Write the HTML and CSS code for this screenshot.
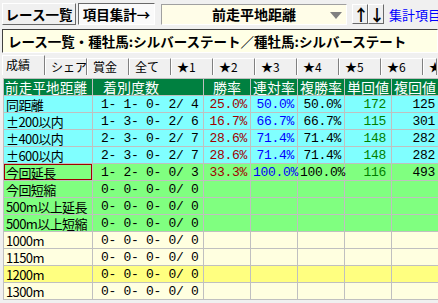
FILE: index.html
```html
<!DOCTYPE html>
<html lang="ja">
<head>
    <meta charset="UTF-8">
    <title>項目集計</title>
    <link rel="stylesheet" href="styles.css">
</head>
<body>
    <div class="toolbar">
        <div class="btn btn-list">レース一覧</div>
        <div class="btn btn-pressed">項目集計→</div>
        <div class="combo">
            <span class="combo-text">前走平地距離</span>
            <span class="combo-arrow"></span>
        </div>
        <div class="arrows">
            <div class="btn btn-arrow">↑</div>
            <div class="btn btn-arrow">↓</div>
        </div>
        <a class="link" href="#">集計項目...</a>
    </div>

    <div class="title-bar">レース一覧・種牡馬:シルバーステート／種牡馬:シルバーステート</div>

    <div class="tabs">
        <div class="tab tab-active">成績</div>
        <div class="tab">シェア</div>
        <div class="tab">賞金</div>
        <div class="tab">全て</div>
        <div class="tab">★1</div>
        <div class="tab">★2</div>
        <div class="tab">★3</div>
        <div class="tab">★4</div>
        <div class="tab">★5</div>
        <div class="tab">★6</div>
        <div class="tab tab-last">★7</div>
    </div>

    <table class="grid">
        <colgroup>
            <col class="c-name">
            <col class="c-count">
            <col class="c-num"><col class="c-num"><col class="c-num"><col class="c-num"><col class="c-num">
        </colgroup>
        <thead>
            <tr>
                <th>前走平地距離</th>
                <th class="h-count">着別度数</th>
                <th>勝率</th>
                <th>連対率</th>
                <th>複勝率</th>
                <th>単回値</th>
                <th>複回値</th>
            </tr>
        </thead>
        <tbody>
            <tr class="cyan">
                <td>同距離</td><td class="cnt">1- 1- 0- 2/ 4</td>
                <td class="num win">25.0%</td><td class="num ren">50.0%</td><td class="num">50.0%</td><td class="num tan">172</td><td class="num">125</td>
            </tr>
            <tr class="cyan">
                <td>±200以内</td><td class="cnt">1- 3- 0- 2/ 6</td>
                <td class="num win">16.7%</td><td class="num ren">66.7%</td><td class="num">66.7%</td><td class="num tan">115</td><td class="num">301</td>
            </tr>
            <tr class="cyan">
                <td>±400以内</td><td class="cnt">2- 3- 0- 2/ 7</td>
                <td class="num win">28.6%</td><td class="num ren">71.4%</td><td class="num">71.4%</td><td class="num tan">148</td><td class="num">282</td>
            </tr>
            <tr class="cyan">
                <td>±600以内</td><td class="cnt">2- 3- 0- 2/ 7</td>
                <td class="num win">28.6%</td><td class="num ren">71.4%</td><td class="num">71.4%</td><td class="num tan">148</td><td class="num">282</td>
            </tr>
            <tr class="green">
                <td class="selected">今回延長</td><td class="cnt">1- 2- 0- 0/ 3</td>
                <td class="num win">33.3%</td><td class="num ren">100.0%</td><td class="num">100.0%</td><td class="num tan">116</td><td class="num">493</td>
            </tr>
            <tr class="green">
                <td>今回短縮</td><td class="cnt">0- 0- 0- 0/ 0</td>
                <td></td><td></td><td></td><td></td><td></td>
            </tr>
            <tr class="green">
                <td>500m以上延長</td><td class="cnt">0- 0- 0- 0/ 0</td>
                <td></td><td></td><td></td><td></td><td></td>
            </tr>
            <tr class="green">
                <td>500m以上短縮</td><td class="cnt">0- 0- 0- 0/ 0</td>
                <td></td><td></td><td></td><td></td><td></td>
            </tr>
            <tr class="cream">
                <td>1000m</td><td class="cnt">0- 0- 0- 0/ 0</td>
                <td></td><td></td><td></td><td></td><td></td>
            </tr>
            <tr class="cream">
                <td>1150m</td><td class="cnt">0- 0- 0- 0/ 0</td>
                <td></td><td></td><td></td><td></td><td></td>
            </tr>
            <tr class="yellow">
                <td>1200m</td><td class="cnt">0- 0- 0- 0/ 0</td>
                <td></td><td></td><td></td><td></td><td></td>
            </tr>
            <tr class="cream">
                <td>1300m</td><td class="cnt">0- 0- 0- 0/ 0</td>
                <td></td><td></td><td></td><td></td><td></td>
            </tr>
        </tbody>
    </table>
</body>
</html>
```

FILE: styles.css
```css
body {
    margin: 0;
    width: 438px;
    height: 303px;
    overflow: hidden;
    background-color: #f0f0f0;
    font-family: "Noto Sans CJK JP", "DejaVu Sans", sans-serif;
    font-size: 14px;
    color: #000;
}
.toolbar {
    display: flex;
    align-items: center;
    width: 438px;
    height: 22px;
    padding: 3px 0 0 2px;
    white-space: nowrap;
    overflow: hidden;
}
.toolbar > * {
    flex: none;
}
.btn {
    box-sizing: border-box;
    height: 22px;
    line-height: 20px;
    border: 1px solid;
    border-color: #fff #696969 #696969 #fff;
    background-color: #f0f0f0;
    font-weight: bold;
    font-size: 13.5px;
    text-align: center;
}
.btn-list {
    width: 74px;
}
.btn-pressed {
    width: 77px;
    margin-left: 2px;
    border-color: #696969 #fff #fff #696969;
    background-color: #fafafa;
}
.combo {
    box-sizing: border-box;
    position: relative;
    width: 186px;
    height: 21px;
    margin-left: 6px;
    border: 1px solid;
    border-color: #a0a0a0 #fff #fff #a0a0a0;
    background-color: #fffde8;
    text-align: center;
    line-height: 19px;
    font-weight: bold;
    font-size: 14px;
}
.combo-arrow {
    position: absolute;
    right: 4px;
    top: 7px;
    border-left: 6px solid transparent;
    border-right: 6px solid transparent;
    border-top: 7px solid #808080;
}
.arrows {
    display: flex;
    margin-left: 5px;
}
.btn-arrow {
    width: 16px;
    height: 20px;
    line-height: 18px;
    font-size: 16px;
}
.link {
    margin-left: 5px;
    color: #0000ff;
    text-decoration: none;
    font-size: 13px;
}
.title-bar {
    box-sizing: border-box;
    height: 24px;
    margin: 4px 0 0 2px;
    padding-left: 5px;
    border: 1px solid;
    border-color: #404040 #fff #fff #404040;
    background-color: #ffffe6;
    font-weight: bold;
    font-size: 13.5px;
    line-height: 22px;
    white-space: nowrap;
    overflow: hidden;
}
.tabs {
    display: flex;
    align-items: flex-end;
    width: 436px;
    height: 20px;
    margin: 2px 0 0 2px;
    white-space: nowrap;
    overflow: hidden;
}
.tab {
    box-sizing: border-box;
    flex: none;
    width: 42px;
    height: 17px;
    line-height: 15px;
    padding-left: 5px;
    border: 1px solid;
    border-bottom: none;
    border-color: #fff #808080 #808080 #fff;
    font-size: 12px;
    overflow: hidden;
}
.tab-active {
    width: 43px;
    height: 20px;
    padding-left: 3px;
    line-height: 18px;
}
.tab-last {
    width: 14px;
}
.grid {
    table-layout: fixed;
    border-collapse: collapse;
    width: 435px;
    margin: 3px 0 0 3px;
}
.c-name {
    width: 89px;
}
.c-count {
    width: 111px;
}
.c-num {
    width: 47px;
}
.grid th,
.grid td {
    height: 16px;
    padding: 0 3px 0 2px;
    border: 1px solid #c0c0c0;
    line-height: 15px;
    white-space: nowrap;
    font-weight: normal;
    font-size: 13px;
    letter-spacing: -0.3px;
}
.grid td:first-child {
    padding-right: 0;
    letter-spacing: -0.6px;
}
.grid th {
    background-color: #008040;
    color: #fff;
    padding: 0;
    text-align: center;
    font-size: 14px;
    letter-spacing: 0;
}
.grid th:first-child {
    text-align: left;
    padding-left: 1px;
    font-size: 13.5px;
    letter-spacing: 0.2px;
}
.grid th.h-count {
    text-align: left;
    padding-left: 10px;
}
.cnt,
.num {
    font-family: "Liberation Mono", "DejaVu Sans Mono", monospace;
    font-size: 13px;
    letter-spacing: -0.6px;
}
.grid td.cnt {
    padding-left: 8px;
}
.num {
    text-align: right;
}
.win {
    color: #a00000;
}
.ren {
    color: #0000ff;
}
.num.tan {
    color: #008000;
    padding-right: 5px;
}
.cyan td {
    background-color: #80ffff;
}
.green td {
    background-color: #80ff80;
}
.cream td {
    background-color: #ffffe0;
}
.yellow td {
    background-color: #ffff80;
}
.grid td.selected {
    box-shadow: inset 0 0 0 1px #a00000;
}
```
